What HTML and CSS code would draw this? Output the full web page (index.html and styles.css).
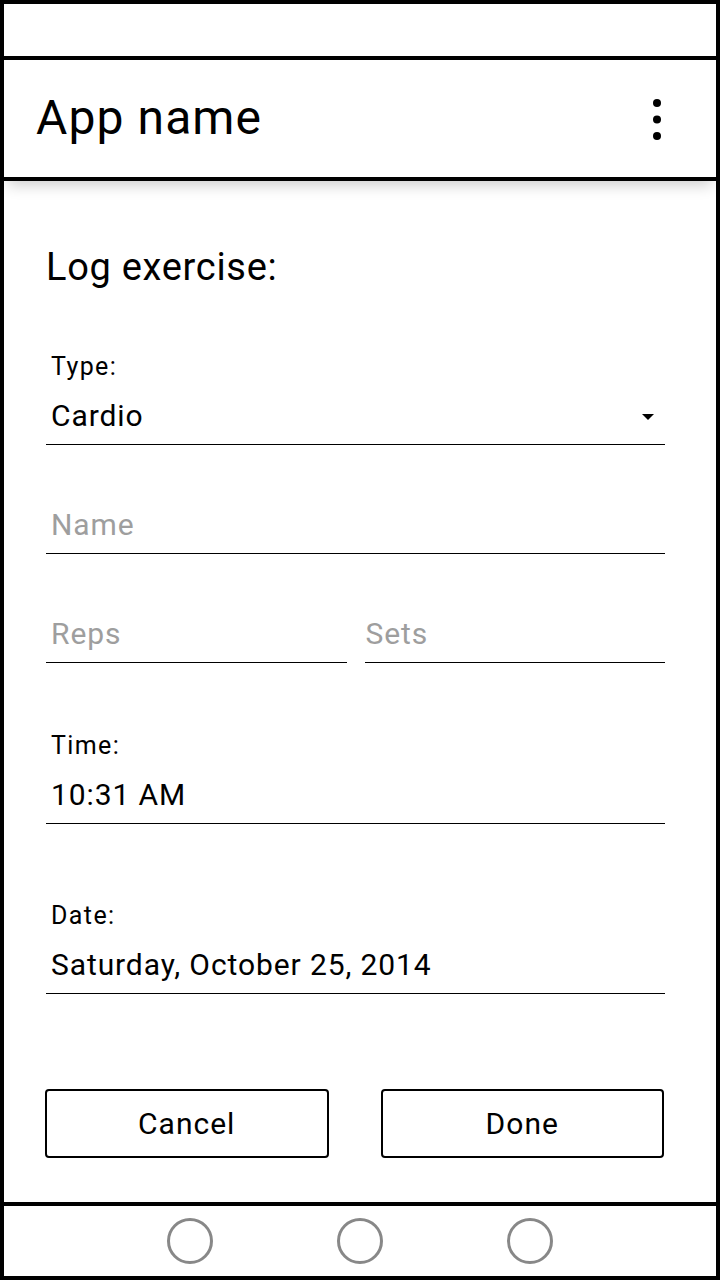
FILE: index.html
```html
<!DOCTYPE html>
<html lang="en">
<head>
<meta charset="utf-8">
<title>Log exercise</title>
<link rel="stylesheet" href="styles.css">
</head>
<body>
<div class="phone">
  <div class="status-bar"></div>
  <header class="app-bar">
    <h1 class="app-title">App name</h1>
    <svg class="kebab" width="10" height="42" viewBox="0 0 10 42" aria-hidden="true">
      <circle cx="5" cy="5" r="4" fill="#000"/>
      <circle cx="5" cy="21.5" r="4" fill="#000"/>
      <circle cx="5" cy="38" r="4" fill="#000"/>
    </svg>
  </header>
  <main class="content">
    <h2 class="page-title">Log exercise:</h2>

    <div class="field field-type">
      <div class="field-label">Type:</div>
      <div class="field-value select">
        <span>Cardio</span>
        <span class="caret"></span>
      </div>
    </div>

    <div class="field field-name">
      <div class="field-value placeholder">Name</div>
    </div>

    <div class="field-row">
      <div class="field">
        <div class="field-value placeholder">Reps</div>
      </div>
      <div class="field">
        <div class="field-value placeholder inset-sm">Sets</div>
      </div>
    </div>

    <div class="field field-time">
      <div class="field-label">Time:</div>
      <div class="field-value">10:31 AM</div>
    </div>

    <div class="field field-date">
      <div class="field-label">Date:</div>
      <div class="field-value">Saturday, October 25, 2014</div>
    </div>

    <div class="actions">
      <button class="btn" type="button">Cancel</button>
      <button class="btn" type="button">Done</button>
    </div>
  </main>
  <nav class="nav-bar">
    <span class="nav-dot"></span>
    <span class="nav-dot"></span>
    <span class="nav-dot"></span>
  </nav>
</div>
</body>
</html>
```

FILE: styles.css
```css
* {
  box-sizing: border-box;
}

html, body {
  margin: 0;
  padding: 0;
  background: #fff;
}

body {
  font-family: Roboto, "Liberation Sans", Arial, sans-serif;
  color: #000;
}

.phone {
  width: 720px;
  height: 1280px;
  border: 4px solid #000;
  display: flex;
  flex-direction: column;
  background: #fff;
  overflow: hidden;
}

.status-bar {
  height: 56px;
  flex: none;
  border-bottom: 4px solid #000;
}

.app-bar {
  position: relative;
  z-index: 1;
  height: 121px;
  flex: none;
  border-bottom: 4px solid #000;
  display: flex;
  align-items: center;
  justify-content: space-between;
  padding: 0 54px 0 32px;
  background: #fff;
  box-shadow: 0 8px 14px -4px rgba(0, 0, 0, 0.2);
}

.app-title {
  margin: 0;
  font-size: 48px;
  line-height: 48px;
  font-weight: 400;
  letter-spacing: 1.1px;
  position: relative;
  top: -1px;
}

.kebab {
  display: block;
}

.content {
  flex: 1;
  display: flex;
  flex-direction: column;
  padding: 67px 51px 0 42px;
}

.page-title {
  margin: 0 0 67px 0;
  font-size: 38px;
  line-height: 38px;
  font-weight: 400;
  letter-spacing: 0.7px;
}

.field {
  border-bottom: 1px solid #000;
  padding-bottom: 13px;
}

.field-label {
  font-size: 25px;
  line-height: 24px;
  letter-spacing: 1.4px;
  padding-top: 2px;
  padding-left: 5px;
  margin-bottom: 22px;
}

.field-value {
  font-size: 30px;
  line-height: 30px;
  letter-spacing: 0.9px;
  padding-left: 5px;
}

.placeholder {
  color: #9e9e9e;
}

.inset-sm {
  padding-left: 1px;
}

.select {
  display: flex;
  align-items: center;
  justify-content: space-between;
  padding-right: 11px;
}

.caret {
  width: 0;
  height: 0;
  margin-top: 1px;
  border-left: 6px solid transparent;
  border-right: 6px solid transparent;
  border-top: 6px solid #000;
}

.field-name {
  margin-top: 65px;
}

.field-row {
  margin-top: 65px;
  display: grid;
  grid-template-columns: 1fr 1fr;
  column-gap: 18px;
}

.field-time {
  margin-top: 69px;
}

.field-date {
  margin-top: 78px;
}

.actions {
  margin-top: 95px;
  display: grid;
  grid-template-columns: 1fr 1fr;
  column-gap: 52px;
  margin-left: -1px;
  margin-right: 1px;
}

.btn {
  height: 69px;
  border: 2px solid #000;
  border-radius: 4px;
  background: #fff;
  font-family: Roboto, "Liberation Sans", Arial, sans-serif;
  font-size: 30px;
  letter-spacing: 1px;
  color: #000;
  padding: 0;
}

.nav-bar {
  height: 74px;
  flex: none;
  border-top: 4px solid #000;
  display: flex;
  align-items: center;
  justify-content: center;
  gap: 124px;
  padding-bottom: 1px;
}

.nav-dot {
  width: 46px;
  height: 46px;
  border: 3px solid #888;
  border-radius: 50%;
}
```
